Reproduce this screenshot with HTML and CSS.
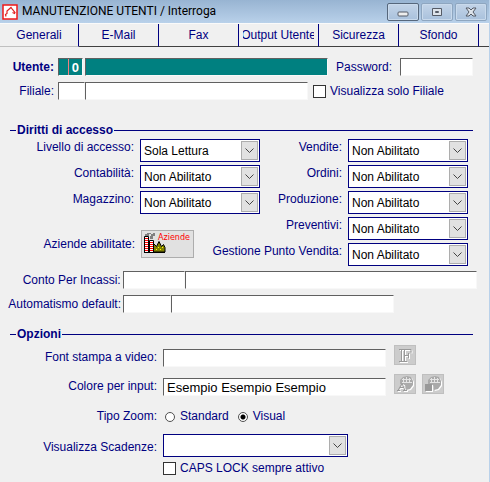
FILE: index.html
```html
<!DOCTYPE html>
<html lang="it">
<head>
  <meta charset="UTF-8">
  <title>Manutenzione Utenti</title>
  <meta name="viewport" content="width=device-width, initial-scale=1.0">
  <link rel="stylesheet" href="styles.css">
</head>
<body>

  <div class="window">
    <header class="titlebar">
      <svg class="app-icon" width="16" height="16" viewBox="0 0 16 16">
        <rect x="1" y="1" width="14" height="14" fill="#fff" stroke="#f01818" stroke-width="1.500"/>
        <path d="M4 12.500l-.5-2 1.500-1V7l4-3.500 1.500 2 2.500 3-.5 1-2-1" fill="none" stroke="#e02020" stroke-width="1.200"/>
      </svg>
      <h1>MANUTENZIONE UTENTI / Interroga</h1>
      <div class="window-buttons">
        <button type="button" class="win-btn current" aria-label="Riduci">
          <svg width="12" height="12" viewBox="0 0 12 12"><rect x="1" y="6" width="10" height="4" rx="1" fill="#eee" stroke="#555b66"/></svg>
        </button>
        <button type="button" class="win-btn" aria-label="Ingrandisci">
          <svg width="12" height="12" viewBox="0 0 12 12"><path d="M1.500 2.500h9v7h-9zM4.500 5.500h3v1h-3z" fill="#dde3ea" stroke="#555b66"/></svg>
        </button>
        <button type="button" class="win-btn" aria-label="Chiudi">
          <svg width="12" height="12" viewBox="0 0 12 12"><path d="M1 2h3l2 2 2-2h3L8 6l3 4H8L6 8l-2 2H1l3-4z" fill="#dde3ea" stroke="#555b66"/></svg>
        </button>
      </div>
    </header>

    <nav class="tabs">
      <button type="button" class="tab active"><span>Generali</span></button>
      <button type="button" class="tab"><span>E-Mail</span></button>
      <button type="button" class="tab"><span>Fax</span></button>
      <button type="button" class="tab"><span>Output Utente</span></button>
      <button type="button" class="tab"><span>Sicurezza</span></button>
      <button type="button" class="tab"><span>Sfondo</span></button>
    </nav>

    <form class="content">
      <div class="row user-row">
        <label class="label-user strong" for="utente">Utente:</label>
        <input class="field code teal" type="text" id="utente" value="0">
        <input class="field user-name teal" type="text" aria-label="Nome utente">
        <label class="label-password" for="password">Password:</label>
        <input class="field password" type="password" id="password">
      </div>
      <div class="row branch-row">
        <label class="label-user" for="filiale">Filiale:</label>
        <input class="field branch-code" type="text" id="filiale">
        <input class="field branch-name" type="text" aria-label="Nome filiale">
        <label class="check"><input type="checkbox">Visualizza solo Filiale</label>
      </div>

      <h2 class="section-title">Diritti di accesso</h2>
      <div class="rights">
        <div class="rights-left">
          <div class="right-row">
            <label for="livello">Livello di accesso:</label>
            <select id="livello"><option>Sola Lettura</option></select>
          </div>
          <div class="right-row">
            <label for="contabilita">Contabilità:</label>
            <select id="contabilita"><option>Non Abilitato</option></select>
          </div>
          <div class="right-row">
            <label for="magazzino">Magazzino:</label>
            <select id="magazzino"><option>Non Abilitato</option></select>
          </div>
          <div class="right-row companies">
            <span class="label">Aziende abilitate:</span>
            <button type="button" class="companies-btn">
              <svg width="22" height="21" viewBox="0 0 22 21">
                <path d="M1 3V1h2V0h4v1H5v2zM6 6V3h1V1h2V0h2v3H9v3z" fill="#808080"/>
                <path d="M9.500 19v-8.500l3 3 2.500-5 2.500 5 2-2 1.500 3V19z" fill="#808000" stroke="#000"/>
                <path d="M1 4h3v15H1zM6 8h3v11H6z" fill="#fff"/>
                <path d="M1 5.500h3M1 7.500h3M1 9.500h3M1 11.500h3M1 13.500h3M1 15.500h3M1 17.500h3M6 9.500h3M6 11.500h3M6 13.500h3M6 15.500h3M6 17.500h3" stroke="#f00"/>
                <path d="M.5 19V3.500h4V19M5.500 19V7.500h4V19M0 19.500h21" fill="none" stroke="#000"/>
                <path d="M12 16.500h1M14 14.500h1M16 16.500h1M18 14.500h1" stroke="#ffff00"/>
              </svg>
              <span>Aziende</span>
            </button>
          </div>
        </div>
        <div class="rights-right">
          <div class="right-row">
            <label for="vendite">Vendite:</label>
            <select id="vendite"><option>Non Abilitato</option></select>
          </div>
          <div class="right-row">
            <label for="ordini">Ordini:</label>
            <select id="ordini"><option>Non Abilitato</option></select>
          </div>
          <div class="right-row">
            <label for="produzione">Produzione:</label>
            <select id="produzione"><option>Non Abilitato</option></select>
          </div>
          <div class="right-row">
            <label for="preventivi">Preventivi:</label>
            <select id="preventivi"><option>Non Abilitato</option></select>
          </div>
          <div class="right-row">
            <label for="gestione">Gestione Punto Vendita:</label>
            <select id="gestione"><option>Non Abilitato</option></select>
          </div>
        </div>
      </div>

      <div class="row account-row">
        <label class="label-account" for="conto">Conto Per Incassi:</label>
        <input class="field account-code" type="text" id="conto">
        <input class="field account-name" type="text" aria-label="Descrizione conto">
      </div>
      <div class="row auto-row">
        <label class="label-account" for="automatismo">Automatismo default:</label>
        <input class="field auto-code" type="text" id="automatismo">
        <input class="field auto-name" type="text" aria-label="Descrizione automatismo">
      </div>

      <h2 class="section-title options-title">Opzioni</h2>
      <div class="options">
        <label class="label" for="font">Font stampa a video:</label>
        <div class="option">
          <input class="field sample" type="text" id="font">
          <button type="button" class="icon-btn" aria-label="Scegli font" disabled>
            <svg width="20" height="18" viewBox="0 0 20 18">
              <g fill="none" stroke="#fff" transform="translate(1 1)"><path d="M4 3.500h12v3M6.500 4v11M9.500 4v11M4 15.500h8M10 9.500h4M13.500 7v5"/></g>
              <g fill="none" stroke="#999"><path d="M4 3.500h12v3M6.500 4v11M9.500 4v11M4 15.500h8M10 9.500h4M13.500 7v5"/></g>
            </svg>
          </button>
        </div>

        <label class="label" for="colore">Colore per input:</label>
        <div class="option">
          <input class="field sample" type="text" id="colore" value="Esempio Esempio Esempio">
          <button type="button" class="icon-btn" aria-label="Colore testo" disabled>
            <svg width="20" height="18" viewBox="0 0 20 18">
              <path d="M5 5l3-3 4-1 4 1 2 4v4l-3 4-4 1-2-5-4-1z" fill="#fff" transform="translate(1 1)"/>
              <path d="M5 5l3-3 4-1 4 1 2 4v4l-3 4-4 1-1-5-5-1z" fill="#aaa"/>
              <path d="M8.500 3v5M11.500 2v6M14.500 3v5M7 4.500h9M7 7.500h10" stroke="#e4e4e4"/>
              <path d="M3 15.500l4-7 3 7M5 12.500h4M2 15.500h3M8 15.500h4" fill="none" stroke="#fff" transform="translate(1 1)"/>
              <path d="M3 15.500l4-7 3 7M5 12.500h4M2 15.500h3M8 15.500h4" fill="none" stroke="#999"/>
            </svg>
          </button>
          <button type="button" class="icon-btn" aria-label="Colore sfondo" disabled>
            <svg width="20" height="18" viewBox="0 0 20 18">
              <path d="M5 5l3-3 4-1 4 1 2 4v4l-3 4-4 1-2-5-4-1z" fill="#fff" transform="translate(1 1)"/>
              <path d="M5 5l3-3 4-1 4 1 2 4v4l-3 4-4 1-1-5-5-1z" fill="#aaa"/>
              <path d="M8.500 3v5M11.500 2v6M14.500 3v5M7 4.500h9M7 7.500h10" stroke="#e4e4e4"/>
              <path d="M3 10h7v7H3z" fill="#fff"/>
              <path d="M2 9h7v7H2z" fill="#999"/>
            </svg>
          </button>
        </div>

        <span class="label">Tipo Zoom:</span>
        <div class="option zoom-option">
          <label class="radio"><input type="radio" name="zoom">Standard</label>
          <label class="radio"><input type="radio" name="zoom" checked>Visual</label>
        </div>

        <label class="label" for="scadenze">Visualizza Scadenze:</label>
        <div class="option">
          <select class="due" id="scadenze"><option></option></select>
        </div>

        <div class="caps-option">
          <label class="check"><input type="checkbox">CAPS LOCK sempre attivo</label>
        </div>
      </div>
    </form>
  </div>

</body>
</html>
```

FILE: styles.css
```css
* {
  box-sizing: border-box;
}

body {
  margin: 0;
  background: #f0f0f0;
  color: #000080;
  font-family: 'Liberation Sans', Arial, sans-serif;
  font-size: 12px;
  line-height: 17px;
}

input,
select,
button {
  margin: 0;
  font-family: inherit;
  font-size: 12px;
  color: inherit;
}

label,
.label {
  white-space: nowrap;
}

.window {
  min-height: 100vh;
  border-right: 1px solid #b9d1ea;
}

/* title bar */
.titlebar {
  display: flex;
  align-items: center;
  height: 23px;
  padding: 0 2px;
  background: linear-gradient(#98b4d2, #b9d1ea);
}

.titlebar h1 {
  flex: 1;
  margin: 0 0 0 4px;
  color: #000;
  font-family: Roboto, sans-serif;
  font-size: 12px;
  font-weight: normal;
  white-space: nowrap;
}

.window-buttons {
  display: flex;
  gap: 2px;
}

.win-btn {
  display: flex;
  align-items: center;
  justify-content: center;
  width: 32px;
  height: 18px;
  padding: 0;
  border: 1px solid #8ea6c0;
  border-radius: 2px;
  background: linear-gradient(#c3d4e8, #a9c1dc);
  box-shadow: inset 0 0 0 1px #c9daec;
}

.win-btn.current {
  border-color: #56677c;
}

/* tabs */
.tabs {
  display: flex;
  border-top: 1px solid #fafafa;
}

.tabs::after {
  content: "";
  flex: 1;
  border-bottom: 1px solid #404040;
}

.tab {
  flex: 0 1 80px;
  min-width: 0;
  height: 23px;
  padding: 0 4px;
  border: 0;
  border-right: 1px solid #000080;
  border-bottom: 1px solid #404040;
  background: transparent;
}

.tab span {
  display: flex;
  justify-content: center;
  overflow: hidden;
  white-space: nowrap;
}

.tab.active {
  flex-basis: 79px;
  border-bottom-color: #c0c0c0;
}

/* fields */
.content {
  padding: 11px 12px 8px 5px;
}

.row {
  display: flex;
  align-items: center;
}

.field {
  height: 18px;
  padding: 0 3px;
  border: 1px solid #f8f8f8;
  border-top-color: #606060;
  border-left-color: #606060;
  background: #fff;
  color: #000;
  font-size: 13px;
}

.teal {
  background: #008080;
  color: #fff;
}

.label-user {
  width: 49px;
  margin-right: 4px;
  text-align: right;
}

.strong {
  font-weight: bold;
}

.code {
  width: 25px;
  margin-right: 2px;
  background: linear-gradient(#f08080, #f08080) no-repeat 9px 0 / 1px 100% #008080;
  font-weight: bold;
  text-align: right;
}

.user-name {
  width: 243px;
}

.label-password {
  margin: 0 8px;
}

.password {
  width: 73px;
}

.branch-row {
  margin-top: 6px;
}

.branch-code {
  width: 27px;
}

.branch-name {
  width: 223px;
}

.check,
.radio {
  display: flex;
  align-items: center;
}

.check input {
  appearance: none;
  width: 13px;
  height: 13px;
  margin-right: 4px;
  border: 1px solid #333;
  background: #fff;
}

.branch-row .check {
  margin-left: 5px;
}

/* section headings with a rule on both sides */
.section-title {
  display: flex;
  align-items: center;
  margin: 22px 4px 0 5px;
  font-size: 12px;
  line-height: 17px;
}

.section-title::before,
.section-title::after {
  content: "";
  width: 6px;
  margin-right: 1px;
  border-top: 1px solid #000080;
}

.section-title::after {
  flex: 1;
  margin: 0 0 0 1px;
}

/* access rights */
.rights {
  display: flex;
}

.rights-left {
  width: 255px;
}

.rights-right {
  width: 208px;
}

.right-row {
  display: flex;
  justify-content: flex-end;
  gap: 6px;
  margin-bottom: 3px;
}

select {
  appearance: none;
  flex: none;
  width: 120px;
  height: 23px;
  padding: 0 22px 0 3px;
  border: 1px solid #000080;
  border-radius: 0;
  background: #fff url("data:image/svg+xml,%3Csvg xmlns='http://www.w3.org/2000/svg' width='17' height='19'%3E%3Crect x='.5' y='.5' width='16' height='18' fill='%23e1e1e1' stroke='%23adadad'/%3E%3Cpath d='M4.500 7.500l4 4 4-4' fill='none' stroke='%23444'/%3E%3C/svg%3E") no-repeat right 1px center;
  color: #000;
}

.companies {
  align-items: center;
  margin-top: 16px;
}

.companies-btn {
  display: flex;
  width: 53px;
  height: 28px;
  margin-right: 66px;
  padding: 2px;
  border: 1px solid #adadad;
  background: #e1e1e1;
}

.companies-btn svg {
  flex: none;
}

.companies-btn span {
  margin-left: -8px;
  color: #f00;
  font-family: 'DejaVu Sans', sans-serif;
  font-size: 8px;
  line-height: 10px;
}

.label-account {
  width: 116px;
  text-align: right;
  margin-right: 2px;
}

.account-row {
  margin-top: 2px;
}

.account-code {
  width: 62px;
}

.account-name {
  flex: 0 1 293px;
}

.auto-row {
  margin-top: 6px;
}

.auto-code {
  width: 48px;
}

.auto-name {
  width: 223px;
}

/* options */
.options-title {
  margin-top: 13px;
}

.options {
  display: grid;
  grid-template-columns: 152px 1fr;
  column-gap: 6px;
  row-gap: 7px;
  align-items: center;
  padding-top: 2px;
}

.options > .label {
  padding-top: 3px;
  text-align: right;
}

.option {
  display: flex;
  align-items: flex-end;
  min-height: 22px;
}

.sample {
  width: 223px;
}

.icon-btn {
  display: flex;
  align-self: flex-start;
  width: 22px;
  height: 20px;
  margin-left: 6px;
  padding: 0;
  border: 1px solid #bfbfbf;
  background: #ccc;
}

.sample + .icon-btn {
  margin-left: 8px;
}

.zoom-option {
  align-items: center;
  gap: 7px;
  min-height: 24px;
  padding-top: 3px;
}

.radio input {
  appearance: none;
  width: 10px;
  height: 10px;
  margin: 0 5px 0 2px;
  border: 1px solid #505050;
  border-radius: 50%;
  background: #fff;
}

.radio input:checked {
  background: radial-gradient(#000 0 2px, #fff 3px);
}

.due {
  width: 185px;
}

.caps-option {
  grid-column: 2;
  margin-top: -4px;
}
```
